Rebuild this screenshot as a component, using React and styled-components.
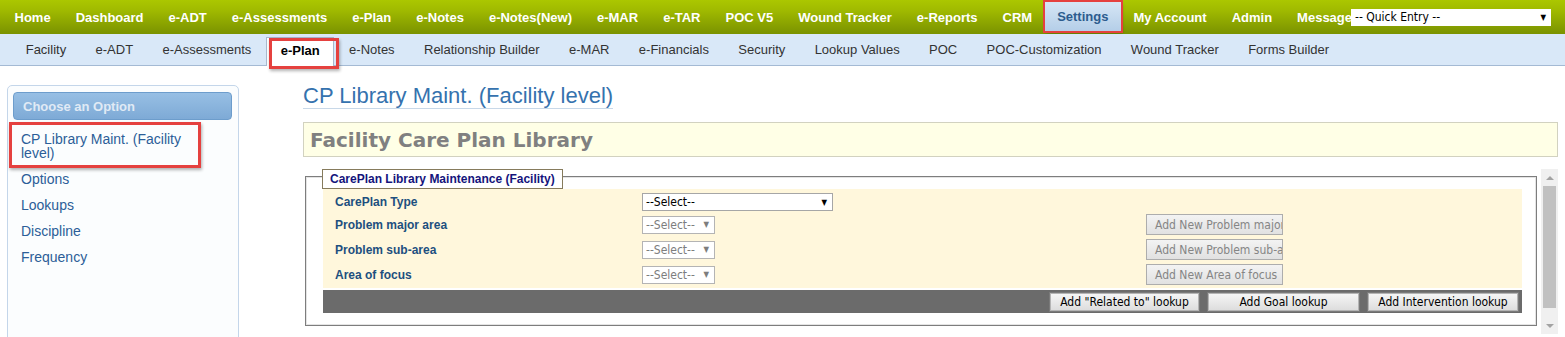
import React from 'react'
import styled, { createGlobalStyle } from 'styled-components'

const topItems = ['Home', 'Dashboard', 'e-ADT', 'e-Assessments', 'e-Plan', 'e-Notes', 'e-Notes(New)', 'e-MAR', 'e-TAR', 'POC V5', 'Wound Tracker', 'e-Reports', 'CRM', 'Settings', 'My Account', 'Admin', 'Message']
const subItems = ['Facility', 'e-ADT', 'e-Assessments', 'e-Plan', 'e-Notes', 'Relationship Builder', 'e-MAR', 'e-Financials', 'Security', 'Lookup Values', 'POC', 'POC-Customization', 'Wound Tracker', 'Forms Builder']
const sideItems = ['CP Library Maint. (Facility level)', 'Options', 'Lookups', 'Discipline', 'Frequency']
const formRows = [
    { label: 'CarePlan Type', wide: true },
    { label: 'Problem major area', button: 'Add New Problem major area' },
    { label: 'Problem sub-area', button: 'Add New Problem sub-area' },
    { label: 'Area of focus', button: 'Add New Area of focus' },
]
const actions = [
    { text: 'Add "Related to" lookup', width: 151 },
    { text: 'Add Goal lookup', width: 153 },
    { text: 'Add Intervention lookup', width: 152 },
]

function App() {
    return (
        <>
            <GlobalStyle />
            <Page>
                <TopBar>
                    <TopList>
                        {topItems.map(item => (
                            <TopItem key={item} $active={item === 'Settings'}>{item}</TopItem>
                        ))}
                    </TopList>
                    <QuickEntry>
                        <span>-- Quick Entry --</span>
                        <Arrow>▼</Arrow>
                    </QuickEntry>
                </TopBar>

                <SubBar>
                    {subItems.map(item => (
                        <SubItem key={item} $active={item === 'e-Plan'}>{item}</SubItem>
                    ))}
                </SubBar>

                <Body>
                    <Sidebar>
                        <SideHeader>Choose an Option</SideHeader>
                        <SideList>
                            {sideItems.map((item, i) => (
                                <SideItem key={item} $marked={i === 0}>{item}</SideItem>
                            ))}
                        </SideList>
                    </Sidebar>

                    <Main>
                        <Title>CP Library Maint. (Facility level)</Title>
                        <Banner>Facility Care Plan Library</Banner>

                        <ScrollArea>
                            <Group>
                                <Legend>CarePlan Library Maintenance (Facility)</Legend>
                                <Form>
                                    {formRows.map(row => (
                                        <React.Fragment key={row.label}>
                                            <Label>{row.label}</Label>
                                            <Select $wide={row.wide}>
                                                <span>--Select--</span>
                                                <Arrow>▼</Arrow>
                                            </Select>
                                            {row.button ? <AddButton disabled>{row.button}</AddButton> : <span />}
                                        </React.Fragment>
                                    ))}
                                </Form>
                                <ActionBar>
                                    {actions.map(a => (
                                        <ActionButton key={a.text} $width={a.width}>{a.text}</ActionButton>
                                    ))}
                                </ActionBar>
                            </Group>

                            <Scrollbar>
                                <ScrollArrow><Triangle /></ScrollArrow>
                                <Thumb />
                                <ScrollSpace />
                                <ScrollArrow><Triangle $down /></ScrollArrow>
                            </Scrollbar>
                        </ScrollArea>
                    </Main>
                </Body>
            </Page>
        </>
    )
}

export default App

const GlobalStyle = createGlobalStyle`
    body {
        margin: 0;
        background: #fff;
        font-family: "Liberation Sans", Arial, sans-serif;
    }
`
const Page = styled.div`
    height: 337px;
    overflow: hidden;
`
const TopBar = styled.div`
    height: 34px;
    display: flex;
    align-items: center;
    background: linear-gradient(#abc700, #a0ba00 30%, #7a9200);
`
const TopList = styled.div`
    flex: 1;
    min-width: 0;
    height: 100%;
    display: flex;
    overflow: hidden;
    padding-left: 2px;
`
const TopItem = styled.div`
    flex-shrink: 0;
    display: flex;
    align-items: center;
    padding: 0 12.5px;
    white-space: nowrap;
    font-size: 13px;
    font-weight: bold;
    color: ${p => (p.$active ? '#2c5c8e' : '#fff')};
    ${p => p.$active && `
        margin: 2px 0 3px;
        background: linear-gradient(#d6e6f5, #b4cee8);
        outline: 2px solid #e5413f;
        box-shadow: 1px 2px 3px rgba(0, 0, 0, 0.35);
    `}
`
const QuickEntry = styled.div`
    width: 200px;
    height: 17px;
    margin-right: 14px;
    box-sizing: border-box;
    display: flex;
    align-items: center;
    justify-content: space-between;
    padding: 0 5px 0 4px;
    background: #fff;
    font-family: "DejaVu Sans Condensed", "DejaVu Sans", sans-serif;
    font-size: 12px;
    color: #000;
`
const Arrow = styled.span`
    font-size: 8px;
`
const SubBar = styled.div`
    height: 31px;
    display: flex;
    padding-left: 11px;
    background: #d9e8f8;
    border-bottom: 1px solid #a4bad4;
`
const SubItem = styled.div`
    position: relative;
    display: flex;
    align-items: center;
    padding: 0 14.7px;
    white-space: nowrap;
    font-size: 13px;
    color: #333;
    ${p => p.$active && `
        padding: 0 13.7px 4px;
        margin: 3px 0 -1px;
        background: #fff;
        border: 1px solid #a8b8cc;
        border-bottom: none;
        font-weight: bold;
        color: #000;

        &::after {
            content: '';
            position: absolute;
            left: 2px;
            right: -6px;
            top: 0;
            bottom: -3px;
            border: 3px solid #e5413f;
            box-shadow: 1px 2px 3px rgba(0, 0, 0, 0.3);
        }
    `}
`
const Body = styled.div`
    display: flex;
    align-items: flex-start;
`
const Sidebar = styled.div`
    width: 232px;
    height: 300px;
    box-sizing: border-box;
    margin: 19px 0 0 7px;
    padding: 6px 6px 0 5px;
    background: #fbfdfe;
    border: 1px solid #c4d6ea;
    border-radius: 5px;
`
const SideHeader = styled.div`
    height: 28px;
    box-sizing: border-box;
    display: flex;
    align-items: center;
    padding-left: 9px;
    background: linear-gradient(#97bfe4, #7eaad6);
    border: 1px solid #6d9dcc;
    border-radius: 4px;
    font-size: 13px;
    font-weight: bold;
    color: #e0eaf5;
`
const SideList = styled.div`
    margin-top: 6px;
`
const SideItem = styled.div`
    position: relative;
    width: 188px;
    box-sizing: border-box;
    padding: 6px 8px;
    font-size: 14px;
    line-height: 14px;
    color: #2c5e98;
    ${p => p.$marked && `
        &::after {
            content: '';
            position: absolute;
            left: -4px;
            right: 0;
            top: -4px;
            bottom: -2px;
            border: 3px solid #e5413f;
            box-shadow: 1px 2px 3px rgba(0, 0, 0, 0.3);
        }
    `}
`
const Main = styled.div`
    flex: 1;
    min-width: 0;
    margin: 18px 7px 0 64px;
`
const Title = styled.div`
    width: fit-content;
    font-size: 22px;
    line-height: 24px;
    color: #3572ae;
    border-bottom: 1px solid #c8d8e8;
`
const Banner = styled.div`
    height: 35px;
    box-sizing: border-box;
    margin-top: 13px;
    display: flex;
    align-items: center;
    padding-left: 6px;
    background: #ffffe6;
    border: 1px solid #d2d2c0;
    font-family: "DejaVu Sans", Verdana, sans-serif;
    font-size: 20px;
    font-weight: bold;
    color: #808080;
`
const ScrollArea = styled.div`
    height: 165px;
    margin-top: 12px;
    display: flex;
    align-items: flex-start;
    gap: 4px;
`
const Group = styled.div`
    flex: 1;
    margin: 7px 0 0 2px;
    padding: 0 14px 12px 17px;
    border: 1px solid #7d7d7d;
    box-shadow: inset 1px 1px 0 #e4e4e4, inset -1px -1px 0 #e4e4e4;
`
const Legend = styled.div`
    width: fit-content;
    height: 20px;
    box-sizing: border-box;
    margin: -8px 0 0 -1px;
    padding: 0 7px;
    background: #fff;
    border: 1px solid #867b5c;
    font-size: 12px;
    line-height: 18px;
    font-weight: bold;
    color: #14147c;
`
const Form = styled.div`
    display: grid;
    grid-template-columns: 319px 504px 1fr;
    grid-template-rows: 20px 25px 25px 25px;
    align-items: center;
    padding: 3px 0 1px;
    background: #fff7dc;
`
const Label = styled.div`
    padding-left: 12px;
    font-size: 12px;
    font-weight: bold;
    color: #1d4f7f;
`
const Select = styled.div`
    width: ${p => (p.$wide ? '191px' : '73px')};
    height: 18px;
    box-sizing: border-box;
    display: flex;
    align-items: center;
    justify-content: space-between;
    padding: 0 5px 0 3px;
    background: #fff;
    border: 1px solid ${p => (p.$wide ? '#a6a6a6' : '#b4b4b4')};
    font-family: "DejaVu Sans Condensed", "DejaVu Sans", sans-serif;
    font-size: 12px;
    color: ${p => (p.$wide ? '#000' : '#7d7d7d')};
`
const AddButton = styled.button`
    justify-self: start;
    width: 137px;
    height: 21px;
    padding: 0 0 0 8px;
    text-align: left;
    white-space: nowrap;
    overflow: hidden;
    background: linear-gradient(#f3f3f3, #e1e1e1);
    border: 1px solid #adadad;
    font-family: "DejaVu Sans Condensed", "DejaVu Sans", sans-serif;
    font-size: 12px;
    color: #858585;
`
const ActionBar = styled.div`
    height: 23px;
    margin-top: 2px;
    display: flex;
    justify-content: flex-end;
    align-items: center;
    gap: 7px;
    padding-right: 3px;
    background: #6b6b6b;
`
const ActionButton = styled.button`
    width: ${p => p.$width}px;
    height: 20px;
    padding: 0;
    background: linear-gradient(#f7f7f7, #dcdcdc);
    border: 1px solid #7a7a7a;
    box-shadow: inset 0 0 0 1px #b4b4b4;
    font-family: "DejaVu Sans Condensed", "DejaVu Sans", sans-serif;
    font-size: 12px;
    color: #000;
`
const Scrollbar = styled.div`
    width: 17px;
    height: 165px;
    display: flex;
    flex-direction: column;
    align-items: center;
    background: #f0f0f0;
`
const ScrollArrow = styled.div`
    height: 17px;
    display: flex;
    align-items: center;
    justify-content: center;
`
const Triangle = styled.div`
    width: 0;
    height: 0;
    border-left: 4px solid transparent;
    border-right: 4px solid transparent;
    ${p => (p.$down ? 'border-top: 4px solid #a3a3a3;' : 'border-bottom: 4px solid #a3a3a3;')}
`
const Thumb = styled.div`
    width: 13px;
    height: 122px;
    background: #c1c1c1;
`
const ScrollSpace = styled.div`
    flex: 1;
`
